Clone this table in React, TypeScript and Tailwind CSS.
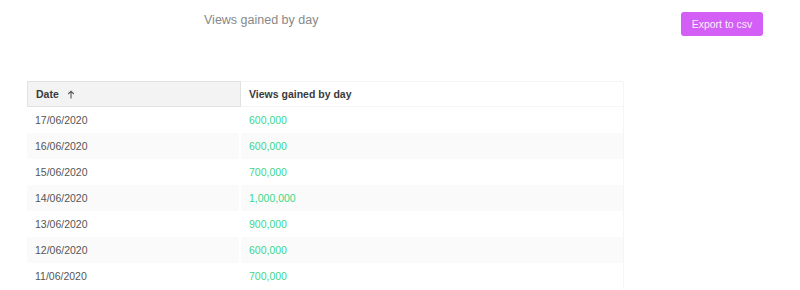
import React from "react";

const rows = [
  ["17/06/2020", "600,000"],
  ["16/06/2020", "600,000"],
  ["15/06/2020", "700,000"],
  ["14/06/2020", "1,000,000"],
  ["13/06/2020", "900,000"],
  ["12/06/2020", "600,000"],
  ["11/06/2020", "700,000"],
];

export default function App() {
  return (
    <div className="w-[800px] h-[290px] overflow-hidden bg-white" style={{ fontFamily: "'Liberation Sans', Arial, sans-serif" }}>
      <div className="flex items-start pt-3 pr-[37px]">
        <div className="pl-[204px] text-[12.5px] leading-[16px] text-[#888]">Views gained by day</div>
        <div className="flex-1" />
        <button className="h-6 w-[82px] rounded-[3px] bg-[#d35ff7] pt-px text-[10.5px] text-[#fbeefe]">Export to csv</button>
      </div>
      <div className="ml-[27px] mt-[45px] w-[597px]">
        <div className="flex h-[26px] text-[10.5px] font-bold text-[#3a3a3a]">
          <div className="flex w-[214px] items-center gap-[8px] border border-[#e2e2e2] bg-[#f3f3f3] pl-2 pt-[2px]">
            <span>Date</span>
            <svg width="8" height="9" viewBox="0 0 8 9" className="mb-[1px]">
              <path d="M4 8.5V1.2M1.2 4 4 1.2 6.8 4" fill="none" stroke="#555" strokeWidth="1.1" />
            </svg>
          </div>
          <div className="flex flex-1 items-center border-y border-r border-[#f5f5f5] pl-2 pt-[2px]">Views gained by day</div>
        </div>
        {rows.map(([d, v], i) => (
          <div key={d} className={`flex h-[26px] text-[10.5px] ${i % 2 === 1 ? "bg-[#fafafa]" : "bg-white"}`}>
            <div className="flex w-[214px] items-center border-r-2 border-white pl-2 pt-[2px] text-[#555]">{d}</div>
            <div className="flex flex-1 items-center border-r border-[#f5f5f5] pl-2 pt-[2px] text-[#3bd68a]">{v}</div>
          </div>
        ))}
      </div>
    </div>
  );
}
